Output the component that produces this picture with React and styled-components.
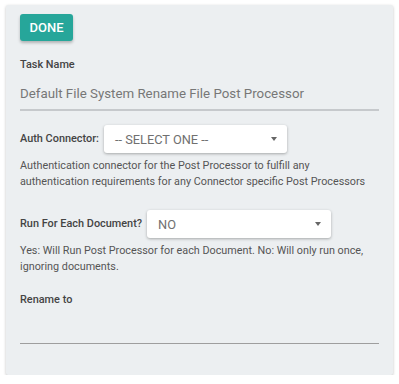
import styled, { createGlobalStyle } from "styled-components";

const Global = createGlobalStyle`
  body {
    margin: 0;
    background: #fff;
    font-family: Roboto, "Liberation Sans", sans-serif;
  }
`;

const Card = styled.div`
  margin: 5px 0 0 6px;
  width: 387px;
  box-sizing: border-box;
  padding: 9px 14px 31px 14px;
  background: #eceff1;
  border-radius: 2px;
  box-shadow: 0 1px 3px rgba(0, 0, 0, 0.25);
`;

const DoneButton = styled.button`
  display: block;
  width: 53px;
  height: 27px;
  padding: 0;
  border: none;
  border-radius: 3px;
  background: #26a69a;
  color: #fff;
  font-family: inherit;
  font-size: 13px;
  font-weight: 500;
  box-shadow: 0 2px 3px rgba(0, 0, 0, 0.25);
`;

const Label = styled.div`
  font-size: 10.9px;
  font-weight: 500;
  color: #444;
  line-height: 14px;
  white-space: nowrap;
`;

const Field = styled.div`
  margin-top: ${(p) => p.$top}px;
`;

const TextInput = styled.div`
  height: ${(p) => p.$height}px;
  margin-top: 5px;
  box-sizing: border-box;
  padding-top: 8px;
  border-bottom: ${(p) => (p.$thin ? "1px solid #9e9e9e" : "2px solid #c6c9cc")};
  font-size: 13.3px;
  color: #777;
  line-height: 18px;
`;

const SelectRow = styled.div`
  display: flex;
  align-items: center;
  gap: 5px;
  margin-top: ${(p) => p.$top}px;
`;

const Select = styled.div`
  display: flex;
  align-items: center;
  justify-content: space-between;
  width: ${(p) => p.$width}px;
  height: 28px;
  box-sizing: border-box;
  padding: 0 10px 0 11px;
  background: #fff;
  border-radius: 3px;
  box-shadow: 0 1px 3px rgba(0, 0, 0, 0.3);
  font-size: 12.8px;
  color: #707070;
`;

const Caret = styled.span`
  width: 0;
  height: 0;
  border-left: 3.5px solid transparent;
  border-right: 3.5px solid transparent;
  border-top: 4px solid #666;
`;

const Help = styled.p`
  margin: 5px 0 0;
  font-size: 10.8px;
  line-height: 16px;
  color: #555;
`;

export default function App() {
  return (
    <>
      <Global />
      <Card>
        <DoneButton>DONE</DoneButton>
        <Field $top={17}>
          <Label>Task Name</Label>
          <TextInput $height={34}>Default File System Rename File Post Processor</TextInput>
        </Field>
        <SelectRow $top={14}>
          <Label>Auth Connector:</Label>
          <Select $width={183}>
            -- SELECT ONE --
            <Caret />
          </Select>
        </SelectRow>
        <Help>
          Authentication connector for the Post Processor to fulfill any
          <br />
          authentication requirements for any Connector specific Post Processors
        </Help>
        <SelectRow $top={20}>
          <Label>Run For Each Document?</Label>
          <Select $width={184}>
            NO
            <Caret />
          </Select>
        </SelectRow>
        <Help>
          Yes: Will Run Post Processor for each Document. No: Will only run once,
          <br />
          ignoring documents.
        </Help>
        <Field $top={18}>
          <Label>Rename to</Label>
          <TextInput $height={32} $thin />
        </Field>
      </Card>
    </>
  );
}
